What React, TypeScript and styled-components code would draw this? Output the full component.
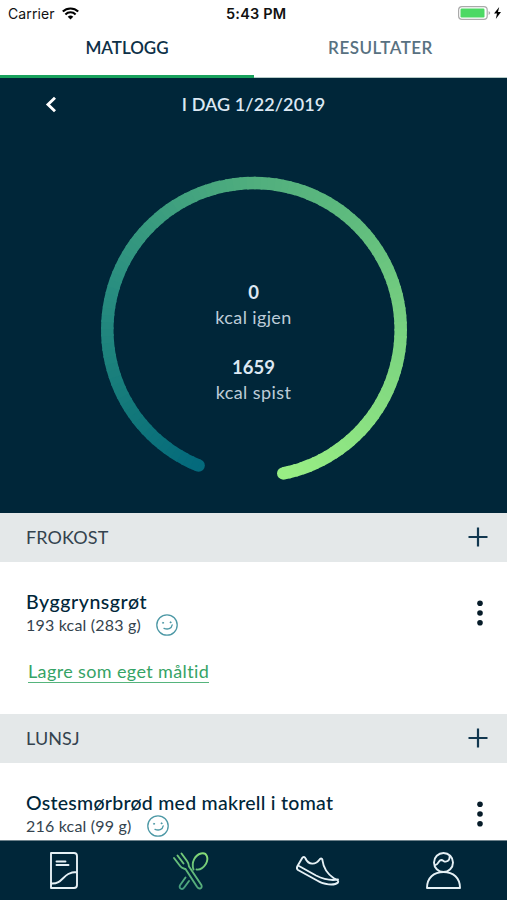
import React from "react";
import styled, { createGlobalStyle } from "styled-components";

const ink = "#002639";

const GlobalStyle = createGlobalStyle`
  * { box-sizing: border-box; }
  body { margin: 0; background: #fff; font-family: Lato, "Open Sans", sans-serif; }
  button { border: 0; background: none; padding: 0; margin: 0; font: inherit; color: inherit; display: flex; }
  svg { display: block; overflow: visible; }
`;

const Screen = styled.div`
  width: 507px;
  height: 900px;
  display: flex;
  flex-direction: column;
  overflow: hidden;
  background: #fff;
`;

const Label = styled.span<{ $size: number; $weight?: number; $spacing?: number; $color?: string; $line?: number }>`
  font-size: ${(p) => p.$size}px;
  font-weight: ${(p) => p.$weight ?? 400};
  letter-spacing: ${(p) => p.$spacing ?? 0}px;
  color: ${(p) => p.$color ?? "inherit"};
  line-height: ${(p) => p.$line ?? 24}px;
  white-space: nowrap;
`;

const StatusBar = styled.header`
  height: 28px;
  flex: none;
  display: grid;
  grid-template-columns: 218px 1fr 218px;
  align-items: center;
  justify-items: center;
  padding: 0 6px 0 8px;
  color: #111;
  font-family: Inter, sans-serif;
`;

const StatusGroup = styled.div<{ $end?: boolean }>`
  display: flex;
  align-items: center;
  gap: ${(p) => (p.$end ? 3 : 7)}px;
  justify-self: ${(p) => (p.$end ? "end" : "start")};
  padding: ${(p) => (p.$end ? "0 3px 2px 0" : "0 0 1px")};
`;

const Tabs = styled.nav`
  height: 50px;
  flex: none;
  display: grid;
  grid-template-columns: 254px 253px;
`;

const Tab = styled.button<{ $active?: boolean }>`
  && {
    justify-content: center;
    padding-top: 8px;
    color: ${(p) => (p.$active ? "#0d3047" : "#587181")};
    border-bottom: ${(p) => (p.$active ? "3px solid #18a15c" : "1px solid #b5cbc7")};
  }
`;

const Summary = styled.section`
  height: 435px;
  flex: none;
  background: ${ink};
  color: #dce8f3;
`;

const DateRow = styled.div`
  height: 52px;
  display: grid;
  grid-template-columns: 102px 303px 102px;
  align-items: center;
  justify-items: center;
`;

const Ring = styled.div`
  display: grid;
  justify-items: center;
  margin-top: 39px;
  > * { grid-area: 1 / 1; }
`;

const RingText = styled.div`
  display: flex;
  flex-direction: column;
  align-items: center;
  padding-top: 111px;
`;

const Gap = styled.div`
  height: 25px;
`;

const Meals = styled.main`
  flex: 1;
  min-height: 0;
  overflow: hidden;
`;

const MealHeader = styled.div`
  height: 49px;
  padding: 0 19px 2px 26px;
  display: flex;
  align-items: center;
  justify-content: space-between;
  background: #e4e8e9;
  color: #34434e;
`;

const MealBody = styled.div`
  height: 152px;
  padding: 27px 24px 0 26px;
`;

const FoodRow = styled.div`
  display: flex;
  justify-content: space-between;
  align-items: center;
`;

const FoodInfo = styled.div`
  display: flex;
  flex-direction: column;
  color: ${ink};
`;

const Amount = styled.div`
  display: flex;
  align-items: center;
  gap: 15px;
  height: 22px;
  padding-bottom: 2px;
  color: #34434e;
`;

const SaveLink = styled.a`
  display: inline-block;
  margin: 24px 0 0 2px;
  height: 22px;
  line-height: 21px;
  border-bottom: 1px solid #55b47c;
  color: #35a365;
`;

const BottomBar = styled.nav`
  height: 60px;
  flex: none;
  display: grid;
  grid-template-columns: repeat(4, 1fr);
  justify-items: center;
  align-items: center;
  padding-left: 1px;
  background: ${ink};
  color: #e5f0f5;
  border-top: 1px solid #6d818b;
`;

const Wifi = () => (
  <svg width="17" height="13" viewBox="0 0 17 13" fill="none" stroke="#000" strokeWidth="2.1">
    <path d="M.8 4.6a11 11 0 0 1 15.4 0M3.4 7.4a7.3 7.3 0 0 1 10.2 0" />
    <path d="M5.7 9.8a4.1 4.1 0 0 1 5.6 0L8.5 12.4Z" fill="#000" stroke="none" />
  </svg>
);

const Battery = () => (
  <svg width="33" height="14" viewBox="0 0 33 14">
    <rect x=".6" y=".6" width="28.6" height="12.8" rx="3.4" fill="#fff" stroke="#aaa" strokeWidth="1.2" />
    <rect x="2.5" y="2.5" width="24" height="9" rx="1.2" fill="#4cd964" />
    <path d="M30.6 5v4c2.2-.9 2.2-3.1 0-4" fill="#aaa" />
  </svg>
);

const Bolt = () => (
  <svg width="7" height="12" viewBox="0 0 7 12">
    <path d="M5.2 0 0 6.6h3L1.8 12 7 5H4Z" fill="#000" />
  </svg>
);

const Plus = () => (
  <svg width="20" height="20" viewBox="0 0 20 20" stroke="#123850" strokeWidth="2.2">
    <path d="M.5 10h19M10 .5v19" />
  </svg>
);

const Dots = () => (
  <svg width="6" height="26" viewBox="0 0 6 26" fill="#071c29">
    <circle cx="3" cy="3.2" r="2.8" />
    <circle cx="3" cy="13" r="2.8" />
    <circle cx="3" cy="22.7" r="2.8" />
  </svg>
);

const Smiley = () => (
  <svg width="22" height="22" viewBox="0 0 22 22" fill="none" stroke="#4c98a5" strokeWidth="1.3" strokeLinecap="round">
    <circle cx="11" cy="11" r="10.2" />
    <path d="M8 14.3c3.7 1.5 7.5.5 8.2-3.5" />
    <circle cx="7" cy="8.8" r=".6" fill="#4c98a5" strokeWidth=".7" />
    <circle cx="14.5" cy="8.3" r=".6" fill="#4c98a5" strokeWidth=".7" />
  </svg>
);

const ringStops: [number, number[]][] = [
  [0, [4, 106, 124]],
  [0.1, [18, 120, 122]],
  [0.25, [40, 141, 128]],
  [0.48, [80, 174, 126]],
  [0.62, [96, 188, 126]],
  [0.78, [124, 212, 128]],
  [1, [152, 238, 132]],
];

const ringColor = (t: number) => {
  const i = Math.max(1, ringStops.findIndex(([stop]) => stop >= t));
  const [from, a] = ringStops[i - 1];
  const [to, b] = ringStops[i];
  const k = (t - from) / (to - from);
  return `rgb(${a.map((v, c) => Math.round(v + (b[c] - v) * k)).join(",")})`;
};

const ringPoint = (degrees: number) => {
  const r = (degrees * Math.PI) / 180;
  return `${(154 + 146.7 * Math.cos(r)).toFixed(2)} ${(160.7 + 146.7 * Math.sin(r)).toFixed(2)}`;
};

const START = 112.2;
const SWEEP = 326.3;
const STEPS = 120;

const ProgressRing = () => (
  <svg width="307" height="315" viewBox="0 0 307 315" fill="none" strokeWidth="12.5">
    <path d={`M${ringPoint(START)}h.01`} stroke={ringColor(0)} strokeLinecap="round" />
    <path d={`M${ringPoint(START + SWEEP)}h.01`} stroke={ringColor(1)} strokeLinecap="round" />
    {Array.from({ length: STEPS }, (_, i) => {
      const from = START + (SWEEP * i) / STEPS;
      const to = START + (SWEEP * Math.min(STEPS, i + 1.3)) / STEPS;
      return <path key={i} d={`M${ringPoint(from)}A146.7 146.7 0 0 1 ${ringPoint(to)}`} stroke={ringColor(i / (STEPS - 1))} />;
    })}
  </svg>
);

type MealProps = { title: string; name: string; amount: string; spacing: number; save?: boolean };

const Meal = ({ title, name, amount, spacing, save }: MealProps) => (
  <section>
    <MealHeader>
      <Label $size={18} $spacing={0.1}>{title}</Label>
      <button aria-label="Legg til"><Plus /></button>
    </MealHeader>
    <MealBody>
      <FoodRow>
        <FoodInfo>
          <Label $size={19.5} $weight={500} $spacing={spacing} $line={26}>{name}</Label>
          <Amount>
            <Label $size={16} $spacing={0.2}>{amount}</Label>
            <Smiley />
          </Amount>
        </FoodInfo>
        <button aria-label="Meny"><Dots /></button>
      </FoodRow>
      {save && <SaveLink><Label $size={18} $spacing={0.37} $line={21}>Lagre som eget måltid</Label></SaveLink>}
    </MealBody>
  </section>
);

export default function App() {
  return (
    <>
      <GlobalStyle />
      <Screen>
        <StatusBar>
          <StatusGroup><Label $size={14} $spacing={0.1}>Carrier</Label><Wifi /></StatusGroup>
          <Label $size={14.5} $weight={600} $spacing={0.2}>5:43 PM</Label>
          <StatusGroup $end><Battery /><Bolt /></StatusGroup>
        </StatusBar>
        <Tabs>
          <Tab $active><Label $size={17} $weight={600}>MATLOGG</Label></Tab>
          <Tab><Label $size={17} $weight={600} $spacing={0.5}>RESULTATER</Label></Tab>
        </Tabs>
        <Summary>
          <DateRow>
            <button aria-label="Forrige dag">
              <svg width="10" height="14" viewBox="0 0 10 14" fill="none" stroke="#fff" strokeWidth="2.9">
                <path d="m9 .8-7 6.7 7 6.7" />
              </svg>
            </button>
            <Label $size={18} $weight={600} $spacing={0.08}>I DAG 1/22/2019</Label>
          </DateRow>
          <Ring>
            <ProgressRing />
            <RingText>
              <Label $size={18.5} $weight={700}>0</Label>
              <Label $size={18} $spacing={0.37} $line={27} $color="#bdccd8">kcal igjen</Label>
              <Gap />
              <Label $size={18.5} $weight={700} $line={23}>1659</Label>
              <Label $size={18} $spacing={0.4} $line={26} $color="#bdccd8">kcal spist</Label>
            </RingText>
          </Ring>
        </Summary>
        <Meals>
          <Meal title="FROKOST" name="Byggrynsgrøt" amount="193 kcal (283 g)" spacing={0.58} save />
          <Meal title="LUNSJ" name="Ostesmørbrød med makrell i tomat" amount="216 kcal (99 g)" spacing={0.26} />
        </Meals>
        <BottomBar>
          <svg width="28" height="37" viewBox="0 0 28 37" fill="none" stroke="currentColor" strokeWidth="1.9" strokeLinejoin="round" strokeLinecap="round">
            <path d="M1 1h23a3 3 0 0 1 3 3v29a3 3 0 0 1-3 3H1ZM1 31.5c13 1 11-11.5 25.8-11.5M6.5 9.5h9M6.5 13h12" />
          </svg>
          <svg width="36" height="38" viewBox="0 0 36 38" fill="none" stroke="url(#cutlery)" strokeWidth="1.9" strokeLinejoin="round" strokeLinecap="round">
            <defs>
              <linearGradient id="cutlery" gradientUnits="userSpaceOnUse" x1="10" y1="38" x2="30" y2="0">
                <stop offset="0" stopColor="#439c7d" />
                <stop offset="1" stopColor="#87dc76" />
              </linearGradient>
            </defs>
            <path d="m1 6 6.5 8.500c1.500 2 3.500 2 5 2.500L24 34.800c2.500 3.500 6 1 4.200-2L16 14.500c-.2-2-.5-3.500-2-5.500L8.500 1.500M4.500 3.500l6 8" />
            <path d="M20.500 17.500c-2.500-7 1.500-14.500 7.500-16 6-1.500 8 5 4.800 10.500-2.500 4-6 6-9.300 5.500M12.500 25.500l-5.300 7.500c-2 3 1.800 5.500 4 2.500l4.800-6.500" />
          </svg>
          <svg width="43" height="29" viewBox="0 0 43 29" fill="none" stroke="currentColor" strokeWidth="1.9" strokeLinejoin="round" strokeLinecap="round">
            <path d="M6.500 1.500c1.500-1 2.500-.5 3 1 3 6.500 10 7 14.500.5 1.500-1.300 2.500 0 2.500 1.500 1 8 6 14 11 17.500 3.500 1.500 5.500 3 4.500 4.500-3.500 3.500-15 2-20-1.500L2 14c-1.300-1-1.300-2.500-.5-4ZM3 10l17 9.500c7 3.500 14 5.500 22 4" />
          </svg>
          <svg width="35" height="37" viewBox="0 0 35 37" fill="none" stroke="currentColor" strokeWidth="1.9" strokeLinejoin="round">
            <circle cx="17.5" cy="10.5" r="9.5" />
            <path d="M9 13c2.8.5 3.3-4.7 6.2-5 2.300 0 2.500 1.900 4.500 1.600 3-.5 4.300-2.600 3.800-5.600M1 36c0-10 6.500-16 16.500-16S34 26 34 36Z" />
          </svg>
        </BottomBar>
      </Screen>
    </>
  );
}
